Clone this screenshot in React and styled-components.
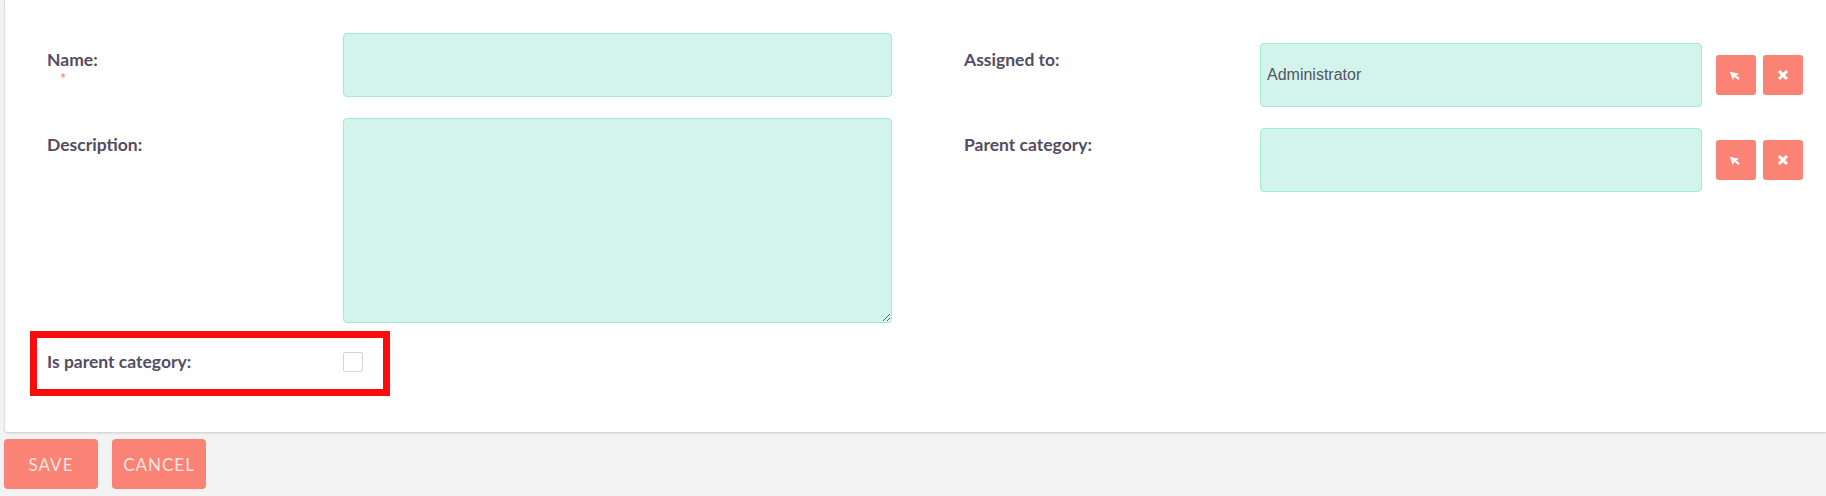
import React from "react";
import styled, { createGlobalStyle } from "styled-components";

const GlobalStyle = createGlobalStyle`
  html, body {
    margin: 0;
    padding: 0;
    background: #f3f3f3;
    font-family: Lato, "Open Sans", sans-serif;
  }
`;

const salmon = "#fa8376";
const labelColor = "#534d64";

const PointerIcon = () => (
  <svg width="14" height="14" viewBox="0 0 12 12">
    <path d="M2 1.5 L2 9 L4.3 7 L6.4 10.6 L8 9.7 L6 6.2 L9 5.9 Z" fill="#fff" transform="rotate(-20 6 6)" />
  </svg>
);

const ClearIcon = () => (
  <svg width="14" height="14" viewBox="0 0 12 12">
    <path d="M2.6 2.6 L9.4 9.4 M9.4 2.6 L2.6 9.4" stroke="#fff" strokeWidth="2.6" />
  </svg>
);

const App = () => {
  return (
    <Page>
      <GlobalStyle />
      <Panel>
        <Row>
          <LeftCell>
            <LabelBox>
              <Label>Name:</Label>
              <Required>*</Required>
            </LabelBox>
            <TextInput />
          </LeftCell>
          <RightCell>
            <LabelBox>
              <Label>Assigned to:</Label>
            </LabelBox>
            <RelateField>
              <RelateInput defaultValue="Administrator" />
              <IconButton type="button">
                <PointerIcon />
              </IconButton>
              <IconButton type="button">
                <ClearIcon />
              </IconButton>
            </RelateField>
          </RightCell>
        </Row>

        <Row>
          <LeftCell>
            <LabelBox>
              <Label>Description:</Label>
            </LabelBox>
            <TextArea />
          </LeftCell>
          <RightCell>
            <LabelBox>
              <Label>Parent category:</Label>
            </LabelBox>
            <RelateField>
              <RelateInput />
              <IconButton type="button">
                <PointerIcon />
              </IconButton>
              <IconButton type="button">
                <ClearIcon />
              </IconButton>
            </RelateField>
          </RightCell>
        </Row>

        <HighlightRow>
          <CheckLabel>Is parent category:</CheckLabel>
          <CheckBox type="checkbox" />
        </HighlightRow>
      </Panel>

      <ActionBar>
        <ActionButton type="button">Save</ActionButton>
        <ActionButton type="button">Cancel</ActionButton>
      </ActionBar>
    </Page>
  );
};

export default App;

const Page = styled.div`
  width: 1826px;
  height: 496px;
  overflow: hidden;
`;

const Panel = styled.div`
  margin-left: 4px;
  padding: 33px 0 36px 25px;
  background: #fff;
  border-left: 1px solid #dedede;
  border-bottom: 1px solid #d8d8d8;
  border-bottom-left-radius: 4px;
  box-shadow: 0 1px 2px rgba(0, 0, 0, 0.08);
`;

const Row = styled.div`
  display: flex;
  align-items: flex-start;
  & + & {
    margin-top: 11px;
  }
`;

const LeftCell = styled.div`
  display: flex;
  align-items: flex-start;
  width: 917px;
  padding-left: 17px;
  box-sizing: border-box;
`;

const RightCell = styled.div`
  display: flex;
  align-items: flex-start;
  flex: 1;
  padding-left: 17px;
`;

const LabelBox = styled.div`
  width: 296px;
  flex-shrink: 0;
  padding-top: 17px;
`;

const Label = styled.div`
  font-size: 17.5px;
  line-height: 20px;
  font-weight: 700;
  color: ${labelColor};
`;

const Required = styled.div`
  margin-left: 13px;
  margin-top: 3px;
  font-size: 15px;
  line-height: 10px;
  color: #ff7272;
`;

const fieldBase = `
  box-sizing: border-box;
  background: #d2f4ec;
  border: 1px solid #a5e8d6;
  border-radius: 4px;
  outline: none;
`;

const TextInput = styled.input`
  ${fieldBase}
  width: 549px;
  height: 64px;
`;

const TextArea = styled.textarea`
  ${fieldBase}
  display: block;
  width: 549px;
  height: 205px;
  margin: 0;
  resize: vertical;
`;

const RelateField = styled.div`
  display: flex;
  align-items: center;
  margin-top: 10px;
`;

const RelateInput = styled.input`
  ${fieldBase}
  width: 442px;
  height: 64px;
  padding: 0 6px;
  font-family: "Liberation Sans", Arial, sans-serif;
  font-size: 16px;
  color: #555560;
  margin-right: 14px;
`;

const IconButton = styled.button`
  display: flex;
  align-items: center;
  justify-content: center;
  width: 40px;
  height: 40px;
  padding: 0;
  border: none;
  border-radius: 3px;
  background: ${salmon};
  cursor: pointer;
  & + & {
    margin-left: 7px;
  }
`;

const HighlightRow = styled.div`
  display: flex;
  align-items: center;
  width: 336px;
  height: 47px;
  margin-top: 8px;
  padding: 0 0 4px 10px;
  border: 7px solid #fa0c0c;
`;

const CheckLabel = styled.div`
  width: 296px;
  font-size: 17.5px;
  line-height: 20px;
  font-weight: 700;
  color: ${labelColor};
`;

const CheckBox = styled.input`
  appearance: none;
  width: 20px;
  height: 20px;
  margin: 1px 0 0 0;
  background: #fff;
  border: 1px solid #cdd5df;
  border-radius: 2px;
`;

const ActionBar = styled.div`
  display: flex;
  gap: 14px;
  margin: 6px 0 0 4px;
`;

const ActionButton = styled.button`
  height: 50px;
  padding: 0 11px;
  min-width: 94px;
  border: none;
  border-radius: 4px;
  background: ${salmon};
  color: #fde4e0;
  font-family: Lato, sans-serif;
  font-size: 17px;
  letter-spacing: 1px;
  text-transform: uppercase;
  cursor: pointer;
`;
